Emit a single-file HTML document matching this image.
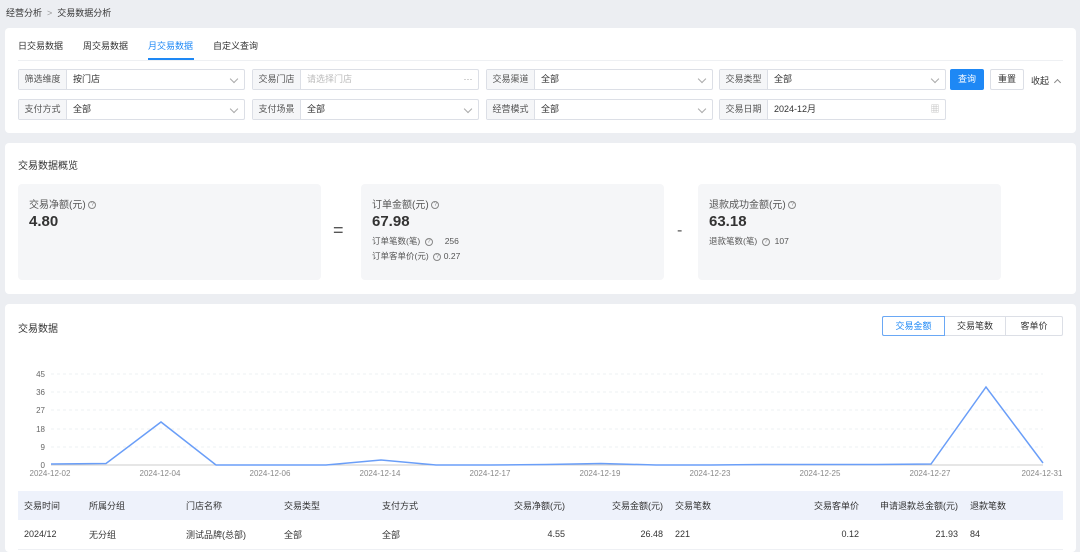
<!DOCTYPE html>
<html><head><meta charset="utf-8"><style>
*{margin:0;padding:0;box-sizing:border-box}
html,body{width:1080px;height:552px;overflow:hidden}
body{background:#eceef2;font-family:"Liberation Sans","Noto Sans CJK SC",sans-serif;font-size:9px;color:#333;position:relative}
.a{position:absolute}
.panel{position:absolute;background:#fff;border-radius:4px;left:5px;width:1071px}
.f{position:absolute;height:21px;border:1px solid #dcdfe6;border-radius:2px;background:#fff;display:flex}
.f .l{width:48px;background:#f5f6f8;border-right:1px solid #dcdfe6;color:#555;text-align:center;line-height:19px}
.f .v{flex:1;padding-left:6px;line-height:19px;color:#333}
.f .ic{width:20px;line-height:19px;color:#999;text-align:center}
.chev{display:inline-block;width:6px;height:6px;border-right:1px solid #aaa;border-bottom:1px solid #aaa;transform:rotate(45deg);margin-top:4px}
.card{position:absolute;top:184px;height:96px;background:#f5f6f8;border-radius:4px;width:303px}
.q{display:inline-block;width:8px;height:8px;border:1px solid #888;border-radius:50%;font-size:6px;line-height:6px;text-align:center;color:#888;vertical-align:middle}
table{border-collapse:collapse;position:absolute;left:18px;top:491px;width:1045px;font-size:9px;table-layout:fixed}
th{background:#eef2fb;height:29px;font-weight:normal;text-align:left;padding-left:6px;color:#333}
td{height:29px;padding-left:6px;border-bottom:1px solid #eef0f4}
.r{text-align:right;padding-right:6px;padding-left:0}
</style></head><body>
<div class="a" style="left:6px;top:6px;font-size:9px;color:#333">经营分析 &nbsp;<span style="color:#999">&gt;</span>&nbsp; 交易数据分析</div>

<div class="panel" style="top:28px;height:105px"></div>
<div class="a" style="left:18px;top:39px;font-size:9px">日交易数据</div>
<div class="a" style="left:83px;top:39px;font-size:9px">周交易数据</div>
<div class="a" style="left:148px;top:39px;font-size:9px;color:#1e88f5">月交易数据</div>
<div class="a" style="left:213px;top:39px;font-size:9px">自定义查询</div>
<div class="a" style="left:18px;top:60px;width:1045px;height:1px;background:#eef0f3"></div>
<div class="a" style="left:148px;top:58px;width:46px;height:2px;background:#1e88f5"></div>

<div class="f" style="left:18px;top:69px;width:227px"><div class="l">筛选维度</div><div class="v">按门店</div><div class="ic"><span class="chev"></span></div></div>
<div class="f" style="left:252px;top:69px;width:227px"><div class="l">交易门店</div><div class="v" style="color:#bbb">请选择门店</div><div class="ic">···</div></div>
<div class="f" style="left:486px;top:69px;width:227px"><div class="l">交易渠道</div><div class="v">全部</div><div class="ic"><span class="chev"></span></div></div>
<div class="f" style="left:719px;top:69px;width:227px"><div class="l">交易类型</div><div class="v">全部</div><div class="ic"><span class="chev"></span></div></div>
<div class="a" style="left:950px;top:69px;width:34px;height:21px;background:#1e88f5;border-radius:2px;color:#fff;text-align:center;line-height:21px">查询</div>
<div class="a" style="left:990px;top:69px;width:34px;height:21px;border:1px solid #dcdfe6;border-radius:2px;text-align:center;line-height:19px">重置</div>
<div class="a" style="left:1031px;top:74px">收起 <span style="display:inline-block;width:5px;height:5px;border-left:1px solid #888;border-top:1px solid #888;transform:rotate(45deg);margin-left:3px;vertical-align:-1px"></span></div>
<div class="f" style="left:18px;top:99px;width:227px"><div class="l">支付方式</div><div class="v">全部</div><div class="ic"><span class="chev"></span></div></div>
<div class="f" style="left:252px;top:99px;width:227px"><div class="l">支付场景</div><div class="v">全部</div><div class="ic"><span class="chev"></span></div></div>
<div class="f" style="left:486px;top:99px;width:227px"><div class="l">经营模式</div><div class="v">全部</div><div class="ic"><span class="chev"></span></div></div>
<div class="f" style="left:719px;top:99px;width:227px"><div class="l">交易日期</div><div class="v">2024-12月</div><div class="ic" style="color:#bbb">▦</div></div>

<div class="panel" style="top:143px;height:151px"></div>
<div class="a" style="left:18px;top:157px;font-size:10px">交易数据概览</div>
<div class="card" style="left:18px"><div class="a" style="left:11px;top:12px;font-size:10px;color:#555">交易净额(元) <span class="q">?</span></div><div class="a" style="left:11px;top:29px;font-size:15px;font-weight:bold">4.80</div></div>
<div class="a" style="left:333px;top:220px;font-size:18px;color:#555">=</div>
<div class="card" style="left:361px"><div class="a" style="left:11px;top:12px;font-size:10px;color:#555">订单金额(元) <span class="q">?</span></div><div class="a" style="left:11px;top:29px;font-size:15px;font-weight:bold">67.98</div>
<div class="a" style="left:11px;top:51px;font-size:8.5px;color:#555">订单笔数(笔) &nbsp;<span class="q">?</span>&nbsp;&nbsp;&nbsp;&nbsp; 256</div>
<div class="a" style="left:11px;top:66px;font-size:8.5px;color:#555">订单客单价(元) &nbsp;<span class="q">?</span> 0.27</div></div>
<div class="a" style="left:677px;top:222px;font-size:16px;color:#555">-</div>
<div class="card" style="left:698px"><div class="a" style="left:11px;top:12px;font-size:10px;color:#555">退款成功金额(元) <span class="q">?</span></div><div class="a" style="left:11px;top:29px;font-size:15px;font-weight:bold">63.18</div>
<div class="a" style="left:11px;top:51px;font-size:8.5px;color:#555">退款笔数(笔) &nbsp;<span class="q">?</span>&nbsp; 107</div></div>

<div class="panel" style="top:304px;height:248px"></div>
<div class="a" style="left:18px;top:320px;font-size:10px">交易数据</div>
<div class="a" style="left:882px;top:316px;width:181px;height:20px;border:1px solid #dcdfe6;border-radius:2px;display:flex;font-size:9px;line-height:18px;text-align:center">
<div style="width:63px;border:1px solid #6aa8f5;margin:-1px 0 -1px -1px;color:#1e88f5;border-radius:2px 0 0 2px">交易金额</div><div style="width:61px;border-right:1px solid #dcdfe6">交易笔数</div><div style="flex:1">客单价</div></div>

<svg class="a" style="left:0;top:360px" width="1080" height="122">
<g stroke="#eef0f3" stroke-dasharray="3,3"><line x1="51" y1="14" x2="1043" y2="14"/><line x1="51" y1="32" x2="1043" y2="32"/><line x1="51" y1="50" x2="1043" y2="50"/><line x1="51" y1="69" x2="1043" y2="69"/><line x1="51" y1="87" x2="1043" y2="87"/></g>
<line x1="51" y1="105" x2="1043" y2="105" stroke="#ccc"/>
<g fill="#666" font-size="8" text-anchor="end" font-family="Liberation Sans"><text x="45" y="17">45</text><text x="45" y="35">36</text><text x="45" y="53">27</text><text x="45" y="72">18</text><text x="45" y="90">9</text><text x="45" y="108">0</text></g>
<g fill="#888" font-size="8" text-anchor="middle" font-family="Liberation Sans"><text x="50" y="116">2024-12-02</text><text x="160" y="116">2024-12-04</text><text x="270" y="116">2024-12-06</text><text x="380" y="116">2024-12-14</text><text x="490" y="116">2024-12-17</text><text x="600" y="116">2024-12-19</text><text x="710" y="116">2024-12-23</text><text x="820" y="116">2024-12-25</text><text x="930" y="116">2024-12-27</text><text x="1042" y="116">2024-12-31</text></g>
<polyline fill="none" stroke="#6a9ef8" stroke-width="1.5" points="51,104 106,103.5 161,62 216,105 271,105 326,105 381,100 436,105 491,105 546,104.5 601,103.5 656,105 711,105 766,104.5 821,104.5 876,104.5 931,104 986,27 1043,103"/>
</svg>

<table>
<colgroup><col style="width:65px"><col style="width:97px"><col style="width:98px"><col style="width:98px"><col style="width:97px"><col style="width:98px"><col style="width:98px"><col style="width:98px"><col style="width:98px"><col style="width:99px"><col></colgroup>
<tr><th>交易时间</th><th>所属分组</th><th>门店名称</th><th>交易类型</th><th>支付方式</th><th class="r">交易净额(元)</th><th class="r">交易金额(元)</th><th>交易笔数</th><th class="r">交易客单价</th><th class="r">申请退款总金额(元)</th><th>退款笔数</th></tr>
<tr><td>2024/12</td><td>无分组</td><td>测试品牌(总部)</td><td>全部</td><td>全部</td><td class="r">4.55</td><td class="r">26.48</td><td>221</td><td class="r">0.12</td><td class="r">21.93</td><td>84</td></tr>
</table>
</body></html>
